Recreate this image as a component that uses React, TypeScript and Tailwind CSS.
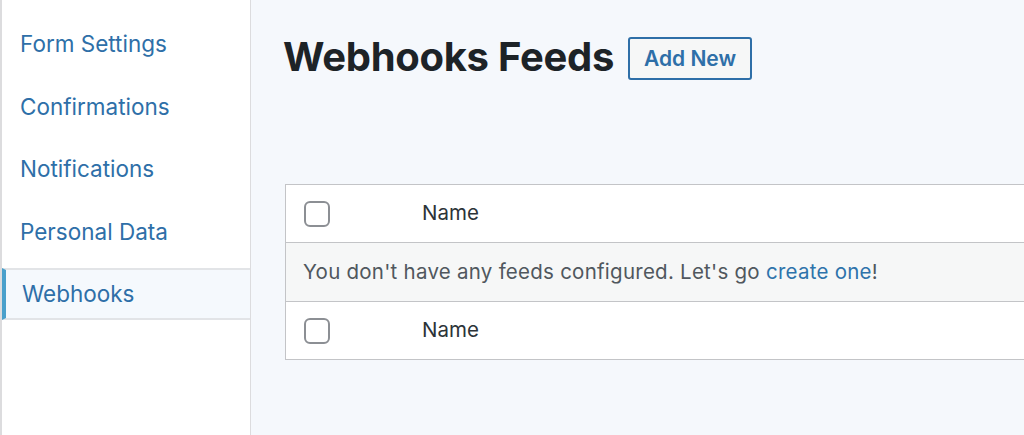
const navItems = ['Form Settings', 'Confirmations', 'Notifications', 'Personal Data', 'Webhooks'];

const Checkbox = () => (
  <span className="block w-[26px] h-[26px] rounded-[6px] border-2 border-[#8c8f94] bg-white" />
);

export default function App() {
  return (
    <div className="flex h-[435px] w-full overflow-hidden bg-[#f5f8fc] font-['Inter',sans-serif]">
      {/* sidebar */}
      <aside className="w-[251px] shrink-0 bg-white border-l-2 border-r border-[#dcdcde]">
        <ul className="mt-[18px] flex flex-col gap-[10.5px]">
          {navItems.map(item => {
            const active = item === 'Webhooks';
            return (
              <li
                key={item}
                className={
                  active
                    ? 'h-[52px] flex items-center pl-[16px] bg-[#f5f9fd] border-y-2 border-[#e2e4e7] border-l-4 border-l-[#4aa0cb] text-[22.5px] text-[#2e6fa8]'
                    : 'h-[52px] flex items-center pl-[18px] text-[22.5px] text-[#2e6fa8]'
                }
              >
                {item}
              </li>
            );
          })}
        </ul>
      </aside>

      {/* main */}
      <main className="flex-1 pl-[34px] pt-[34px]">
        <div className="flex items-center gap-[14px] -ml-[2px]">
          <h1 className="text-[40px] font-bold text-[#1d2327] leading-none tracking-[-0.3px]">Webhooks Feeds</h1>
          <button className="h-[43px] w-[124px] mt-[3px] rounded-[3px] border-2 border-[#2e6fa8] bg-[#f6f7f7] text-[21px] font-semibold text-[#2e6fa8]">
            Add New
          </button>
        </div>

        <div className="mt-[104px] w-[800px] border border-[#c3c4c7] bg-white text-[20.5px] text-[#2c3338]">
          <div className="h-[58px] flex items-center pl-[18px] border-b border-[#c3c4c7]">
            <Checkbox />
            <span className="ml-[92px]">Name</span>
          </div>
          <div className="h-[59px] flex items-center pl-[17px] bg-[#f6f7f7] border-b border-[#c3c4c7] text-[#50575e] tracking-[0.25px]">
            <span>
              You don't have any feeds configured. Let's go{' '}
              <a href="#" className="text-[#2e73ab]">create one</a>!
            </span>
          </div>
          <div className="h-[57px] flex items-center pl-[18px]">
            <Checkbox />
            <span className="ml-[92px]">Name</span>
          </div>
        </div>
      </main>
    </div>
  );
}
